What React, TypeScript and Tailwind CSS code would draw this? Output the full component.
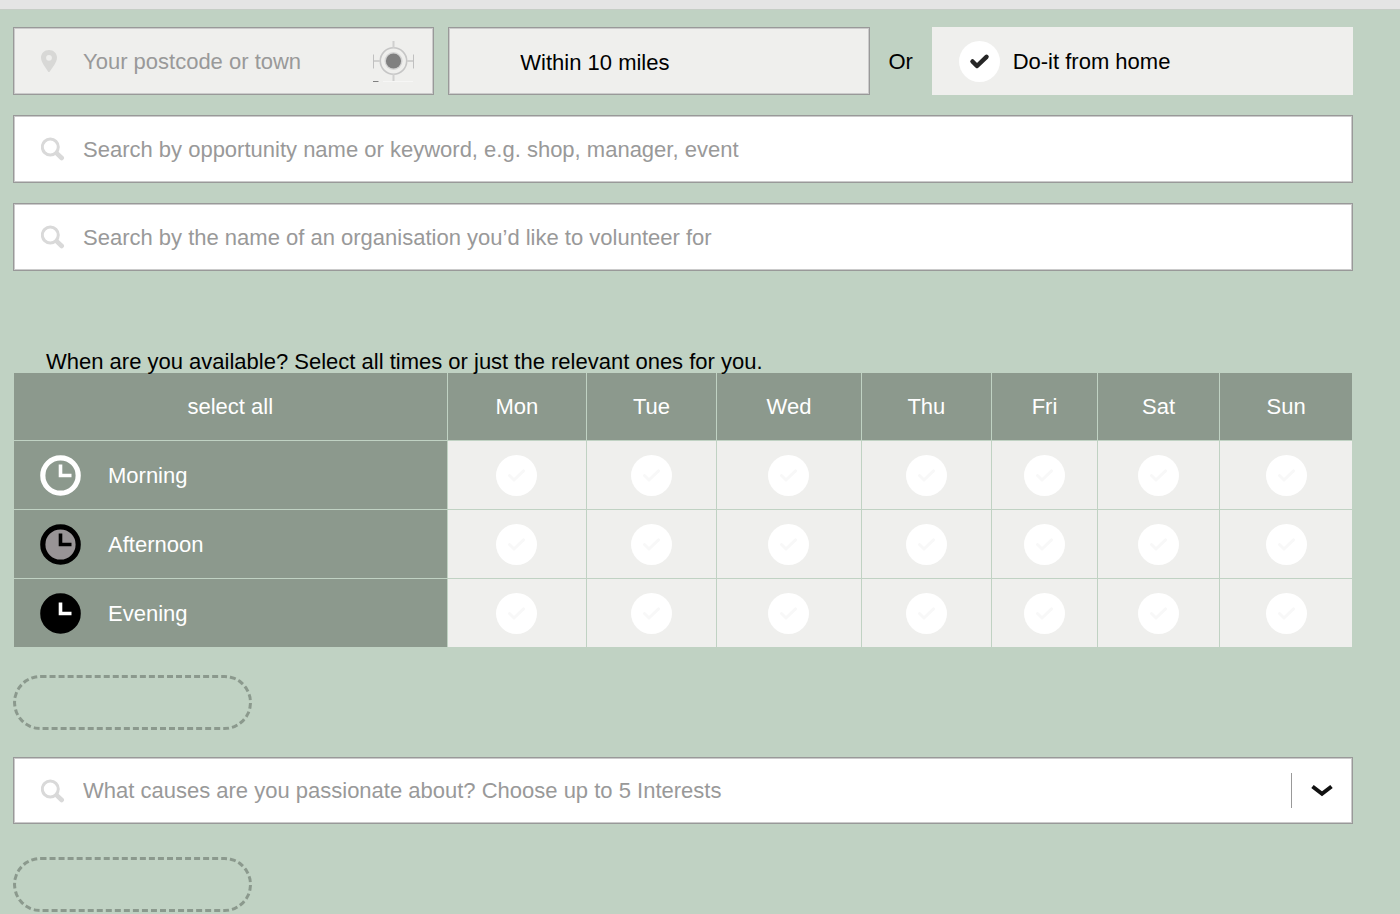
import React, { useState } from "react";

const DAYS = ["Mon", "Tue", "Wed", "Thu", "Fri", "Sat", "Sun"];

type Period = { name: string; ring: string; face: string; hands: string };

const PERIODS: Period[] = [
  { name: "Morning", ring: "#ffffff", face: "none", hands: "#ffffff" },
  { name: "Afternoon", ring: "#000000", face: "#989496", hands: "#000000" },
  { name: "Evening", ring: "#000000", face: "#000000", hands: "#ffffff" },
];

const FIELD =
  "flex items-center border border-[#999999] pl-[27px] shadow-[inset_0_0_0_1px_#cbcbcb]";
const TEXT_INPUT =
  "h-full min-w-0 flex-1 bg-transparent pt-px text-black outline-none placeholder:text-[#999999] placeholder:opacity-100";

function SearchIcon() {
  return (
    <svg className="block size-6" viewBox="0 0 24 24" fill="none" stroke="#d9d9d9" aria-hidden="true">
      <circle cx="9.3" cy="10" r="8" strokeWidth="3" />
      <path d="M15.8 16.300 L20.700 21" strokeWidth="4.600" strokeLinecap="round" />
    </svg>
  );
}

function PinIcon() {
  return (
    <svg className="block h-[22px] w-4" viewBox="0 0 16 22" aria-hidden="true">
      <path
        fill="#d8d8d6"
        fillRule="evenodd"
        d="M8 0 C3.4 0 0 3.4 0 7.6 C0 10.200 1.200 12.600 2.700 14.900 L7.200 21.700 Q8 22.500 8.600 21.700 L13.300 14.900 C14.800 12.600 16 10.200 16 7.600 C16 3.400 12.600 0 8 0 Z M8 4.900 A2.900 2.900 0 1 1 8 10.700 A2.900 2.900 0 1 1 8 4.900 Z"
      />
    </svg>
  );
}

function TargetIcon() {
  return (
    <svg className="block size-[41px]" viewBox="0 0 41 41" fill="none" aria-hidden="true">
      <circle cx="20.500" cy="20" r="13.200" stroke="#c6c6c6" strokeWidth="1.600" />
      <path d="M20.500 0 V7 M20.500 33 V40.500 M1 20 H7 M34 20 H40" stroke="#d0d0cf" strokeWidth="2" />
      <path d="M0.500 13.500 V27.500 M40.500 13.500 V27.500" stroke="#c0c0c0" />
      <path d="M10 40.500 H40" stroke="#f6f6f5" />
      <path d="M0 40.500 H5.500" stroke="#808080" />
      <circle cx="20.500" cy="20" r="9" fill="#d4d4d4" />
      <circle cx="20.500" cy="20" r="7.600" fill="#808080" />
    </svg>
  );
}

function ClockIcon({ ring, face, hands }: Omit<Period, "name">) {
  return (
    <svg className="block size-[41px] shrink-0" viewBox="0 0 41 41" fill="none" aria-hidden="true">
      <circle cx="20.500" cy="20.500" r="17.700" fill={face} stroke={ring} strokeWidth="5.200" />
      <path d="M20.500 9.500 V20.500 H31.500" stroke={hands} strokeWidth="3.600" />
    </svg>
  );
}

function RoundCheck({
  id,
  label,
  faint,
  checked,
  onChange,
}: {
  id: string;
  label?: string;
  faint?: boolean;
  checked: boolean;
  onChange: () => void;
}) {
  return (
    <span className="inline-grid shrink-0 align-middle">
      <input
        id={id}
        type="checkbox"
        aria-label={label}
        checked={checked}
        onChange={onChange}
        className="col-start-1 row-start-1 size-[41px] cursor-pointer appearance-none rounded-full bg-white"
      />
      <svg
        className="pointer-events-none col-start-1 row-start-1 size-[41px]"
        viewBox="0 0 41 41"
        fill="none"
        stroke={faint ? "#f8f8f8" : "#262626"}
        strokeWidth={faint ? 3 : 4.5}
        strokeLinecap="round"
        strokeLinejoin="round"
        aria-hidden="true"
      >
        <path d="M13.500 20.500 L18 25 L27.500 15.800" />
      </svg>
    </span>
  );
}

function SearchField({ id, label }: { id: string; label: string }) {
  return (
    <div className={`${FIELD} h-[68px] bg-white`}>
      <label htmlFor={id} className="w-[42px] shrink-0">
        <SearchIcon />
      </label>
      <input id={id} type="text" aria-label={label} placeholder={label} className={TEXT_INPUT} />
    </div>
  );
}

function Placeholder() {
  return <div className="h-[55px] w-[239px] rounded-full border-[3px] border-dashed border-[#8b998d]" />;
}

export default function App() {
  const [fromHome, setFromHome] = useState(true);
  const [slots, setSlots] = useState<Record<string, boolean>>({});
  const keys = PERIODS.flatMap((p) => DAYS.map((d) => `${p.name}-${d}`));

  const toggle = (key: string) => setSlots((s) => ({ ...s, [key]: !s[key] }));
  const toggleAll = () => {
    const all = keys.every((k) => slots[k]);
    setSlots(Object.fromEntries(keys.map((k) => [k, !all])));
  };

  return (
    <div className="min-h-screen bg-[#c0d2c3] font-['Liberation_Sans',Arial,sans-serif] text-[22px] leading-[22px] text-black">
      <div className="h-[10px] border-b border-[#c5cdc5] bg-[#e4e4e4]" />
      <form className="pr-[47px] pl-[13px] pt-[17px]" onSubmit={(e) => e.preventDefault()}>
        <div className="grid h-[68px] grid-cols-[minmax(0,1fr)_minmax(0,1fr)_34px_minmax(0,1fr)] gap-[14px]">
          <div className={`${FIELD} bg-[#efefed] pr-[19px]`}>
            <label htmlFor="place" className="w-[42px] shrink-0">
              <PinIcon />
            </label>
            <input
              id="place"
              type="text"
              aria-label="Your postcode or town"
              placeholder="Your postcode or town"
              className={TEXT_INPUT}
            />
            <button type="button" aria-label="Use my location">
              <TargetIcon />
            </button>
          </div>
          <select
            aria-label="Distance"
            className="appearance-none border border-[#999999] bg-[#efefed] pt-[3px] pl-[71px] shadow-[inset_0_0_0_1px_#cbcbcb] outline-none"
          >
            <option>Within 10 miles</option>
          </select>
          <div className="flex items-center justify-center pt-px">Or</div>
          <label htmlFor="home" className="flex items-center gap-[13px] bg-[#efefed] pt-px pl-[27px]">
            <RoundCheck id="home" checked={fromHome} onChange={() => setFromHome(!fromHome)} />
            Do-it from home
          </label>
        </div>

        <div className="mt-5 flex flex-col gap-5">
          <SearchField id="keyword" label="Search by opportunity name or keyword, e.g. shop, manager, event" />
          <SearchField id="organisation" label="Search by the name of an organisation you’d like to volunteer for" />
        </div>

        <h2 id="availability" className="mt-[80px] h-[21px] pl-[33px]">
          When are you available? Select all times or just the relevant ones for you.
        </h2>
        <table
          aria-labelledby="availability"
          className="w-full table-fixed border-separate border-spacing-px text-white"
        >
          <colgroup>
            <col className="w-[32.5%]" />
            <col className="w-[10.4%]" />
            <col className="w-[9.7%]" />
            <col className="w-[10.8%]" />
            <col className="w-[9.7%]" />
            <col className="w-[7.9%]" />
            <col className="w-[9.1%]" />
            <col className="w-[9.9%]" />
          </colgroup>
          <thead>
            <tr className="h-[67px]">
              <th className="bg-[#8c998d] p-0 pt-px font-normal">
                <button type="button" onClick={toggleAll} className="cursor-pointer">
                  select all
                </button>
              </th>
              {DAYS.map((day) => (
                <th key={day} scope="col" className="bg-[#8c998d] p-0 pt-px font-normal">
                  {day}
                </th>
              ))}
            </tr>
          </thead>
          <tbody>
            {PERIODS.map(({ name, ...icon }) => (
              <tr key={name} className="h-[68px]">
                <th scope="row" className="bg-[#8c998d] p-0 pt-px pl-[26px] text-left font-normal">
                  <div className="flex items-center gap-[27px]">
                    <ClockIcon {...icon} />
                    {name}
                  </div>
                </th>
                {DAYS.map((day) => {
                  const key = `${name}-${day}`;
                  return (
                    <td key={day} className="bg-[#efefed] p-0 pt-px text-center">
                      <RoundCheck
                        id={key}
                        label={`${day} ${name}`}
                        faint={!slots[key]}
                        checked={!!slots[key]}
                        onChange={() => toggle(key)}
                      />
                    </td>
                  );
                })}
              </tr>
            ))}
          </tbody>
        </table>

        <div className="mt-[27px]">
          <Placeholder />
        </div>

        <div className={`${FIELD} mt-[27px] h-[67px] bg-white`}>
          <label htmlFor="causes" className="w-[42px] shrink-0">
            <SearchIcon />
          </label>
          <input
            id="causes"
            type="text"
            aria-label="What causes are you passionate about? Choose up to 5 Interests"
            placeholder="What causes are you passionate about? Choose up to 5 Interests"
            className={TEXT_INPUT}
          />
          <button
            type="button"
            aria-label="Show interests"
            className="flex h-[35px] w-[61px] items-center justify-center border-l border-[#999999]"
          >
            <svg className="block h-[14px] w-[22px]" viewBox="0 0 22 14" fill="none" aria-hidden="true">
              <path d="M1.500 2.500 L11 9.800 L20.500 2.500" stroke="#111111" strokeWidth="4" />
            </svg>
          </button>
        </div>

        <div className="mt-[33px]">
          <Placeholder />
        </div>
      </form>
    </div>
  );
}
